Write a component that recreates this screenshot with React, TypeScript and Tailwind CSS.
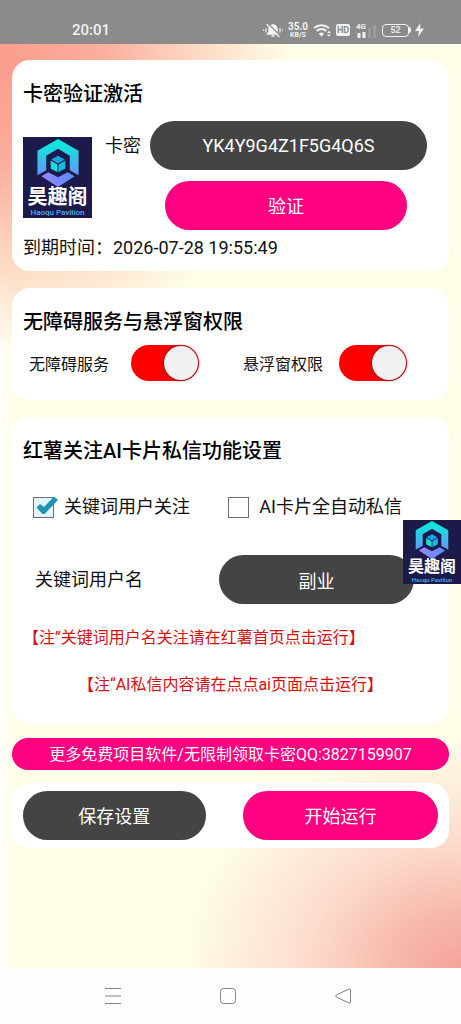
import { useState } from "react";
import type { ReactNode } from "react";
import clsx from "clsx";

export default function App() {
  const [cardKey, setCardKey] = useState("YK4Y9G4Z1F5G4Q6S");
  const [keyword, setKeyword] = useState("副业");
  const [accessibility, setAccessibility] = useState(true);
  const [overlay, setOverlay] = useState(true);
  const [follow, setFollow] = useState(true);
  const [autoMessage, setAutoMessage] = useState(false);

  return (
    <div className="relative flex min-h-screen flex-col bg-[#fefee8] font-[Roboto,'Noto_Sans_CJK_SC',sans-serif] text-lg/6 text-[#111111]">
      <StatusBar />

      <main className="flex flex-1 flex-col bg-[radial-gradient(ellipse_290px_290px_at_0px_20px,#fa9d8e_0%,#fbae9c_35%,#fdd9c4_68%,#fefee800_100%),radial-gradient(ellipse_280px_230px_at_100%_100%,#f4a39a_0%,#f7b9ad_25%,#fcdccc_55%,#fefee800_100%),linear-gradient(90deg,#fffffa_0px,#fefee6_16px,#fefee8_100%)] px-3 pt-4">
        <Card className="mb-[17px] pt-5 pb-[11px]">
          <Title>卡密验证激活</Title>
          <div className="mt-[13px] flex gap-[13px] pr-[11px]">
            <Logo className="mt-4" />
            <div className="flex-1">
              <div className="flex items-center gap-[9px]">
                <label htmlFor="card-key" className="shrink-0">卡密</label>
                <PillInput id="card-key" value={cardKey} onChange={setCardKey} />
              </div>
              <div className="mt-[11px] pr-5 pl-[60px]">
                <PillButton className="w-full bg-[#ff0080]">验证</PillButton>
              </div>
            </div>
          </div>
          <p className="mt-1.5">到期时间：2026-07-28 19:55:49</p>
        </Card>

        <Card className="mb-[17px] pt-5 pb-[19px]">
          <Title>无障碍服务与悬浮窗权限</Title>
          <div className="mt-[9px] flex justify-between pr-[31px] pl-1.5">
            <Switch className="gap-[22px]" label="无障碍服务" checked={accessibility} onChange={setAccessibility} />
            <Switch className="gap-4" label="悬浮窗权限" checked={overlay} onChange={setOverlay} />
          </div>
        </Card>

        <Card className="mb-3.5 pt-5 pb-[27px]">
          <Title>红薯关注AI卡片私信功能设置</Title>
          <div className="mt-[30px] flex justify-between pr-9 pl-2.5">
            <CheckBox label="关键词用户关注" checked={follow} onChange={setFollow} />
            <CheckBox label="AI卡片全自动私信" checked={autoMessage} onChange={setAutoMessage} />
          </div>
          <div className="mt-9 flex items-center justify-between pr-6 pl-3">
            <label htmlFor="keyword">关键词用户名</label>
            <div className="w-[195px]">
              <PillInput id="keyword" value={keyword} onChange={setKeyword} />
            </div>
          </div>
          <Note className="mt-[22px]">【注”关键词用户名关注请在红薯首页点击运行】</Note>
          <Note className="mt-[23px] text-center">【注“AI私信内容请在点点ai页面点击运行】</Note>
        </Card>

        <button className="mb-[13px] h-8 w-full rounded-full bg-[#ff0080] pt-0.5 text-base/6 text-white">
          更多免费项目软件/无限制领取卡密QQ:3827159907
        </button>

        <Card className="flex justify-between py-2">
          <PillButton className="w-[44%] bg-[#444444]">保存设置</PillButton>
          <PillButton className="w-[47%] bg-[#ff0080]">开始运行</PillButton>
        </Card>
      </main>

      <NavBar />

      {/* floating window shortcut, docked to the right edge */}
      <Logo small className="absolute top-[520px] right-0" />
    </div>
  );
}

function Card({ className, children }: { className?: string; children: ReactNode }) {
  return <section className={clsx("rounded-[18px] bg-white px-[11px]", className)}>{children}</section>;
}

function Title({ children }: { children: ReactNode }) {
  return <h2 className="text-xl/7 font-medium text-black">{children}</h2>;
}

function Note({ className, children }: { className?: string; children: ReactNode }) {
  return <p className={clsx("text-base/6 text-[#d81010]", className)}>{children}</p>;
}

function PillInput({ id, value, onChange }: { id: string; value: string; onChange: (v: string) => void }) {
  return (
    <input
      id={id}
      className="h-[49px] w-full min-w-0 rounded-full bg-[#444444] px-4 text-center text-lg/6 text-white outline-none"
      value={value}
      onChange={(e) => onChange(e.target.value)}
    />
  );
}

function PillButton({ className, children }: { className?: string; children: ReactNode }) {
  return <button className={clsx("h-[49px] rounded-full pt-0.5 text-white", className)}>{children}</button>;
}

type ToggleProps = { label: string; checked: boolean; onChange: (v: boolean) => void; className?: string };

function Switch({ label, checked, onChange, className }: ToggleProps) {
  return (
    <label className={clsx("flex items-center text-base/6", className)}>
      <span className="pt-1">{label}</span>
      <input
        type="checkbox"
        role="switch"
        className="flex h-9 w-17 appearance-none items-center rounded-full bg-gray-300 p-px before:size-[34px] before:rounded-full before:bg-[#f1f1f1] before:shadow-[0_0_2px_1px_rgba(100,30,30,0.6)] checked:justify-end checked:bg-[#ff0000]"
        checked={checked}
        onChange={(e) => onChange(e.target.checked)}
      />
    </label>
  );
}

function CheckBox({ label, checked, onChange }: ToggleProps) {
  return (
    <label className="flex items-center gap-2.5">
      <span className="relative">
        <input
          type="checkbox"
          className="block size-[21px] appearance-none border border-[#6e6e6e] bg-white checked:bg-[#e4f4fb]"
          checked={checked}
          onChange={(e) => onChange(e.target.checked)}
        />
        {checked && (
          <svg viewBox="0 0 26 22" className="pointer-events-none absolute -top-px left-0 h-[22px] w-[26px]">
            <path d="M3.5 11.5 L7 8 L11 11 L21 0.5 L25 4 L11.5 18 L9.5 18 Z" fill="#1f93b6" />
          </svg>
        )}
      </span>
      {label}
    </label>
  );
}

function Logo({ small, className }: { small?: boolean; className?: string }) {
  return (
    <div
      className={clsx(
        "flex shrink-0 flex-col items-center bg-[#1b1a4b] font-bold text-white",
        small ? "h-16 w-[58px] pt-px" : "h-[81px] w-[69px] pt-0.5",
        className,
      )}
    >
      <svg viewBox="0 0 42 49" className={small ? "h-[38px] w-[34px]" : "h-12 w-[42px]"}>
        <defs>
          <linearGradient id="hex" x1="0" y1="0" x2="0" y2="1">
            <stop offset="0.2" stopColor="#12e3dc" />
            <stop offset="1" stopColor="#6795f8" />
          </linearGradient>
          <linearGradient id="base" x1="0" y1="0" x2="1" y2="0">
            <stop offset="0" stopColor="#9a86f8" />
            <stop offset="1" stopColor="#5a8cf8" />
          </linearGradient>
        </defs>
        <path d="M21 0 L42 12 V37 L33 32 V17 L21 10 L9 17 V32 L0 37 V12 Z" fill="url(#hex)" />
        <path d="M4 38 L11 34 L21 39 L31 34 L38 38 L21 49 Z" fill="url(#base)" />
        <path d="M21 17 L28 21 L21 25 L14 21 Z" fill="#18a4e8" />
        <path d="M13.5 22 L20.5 26 V34 L13.5 30 Z" fill="#18dcd8" />
        <path d="M28.5 22 L21.5 26 V34 L28.5 30 Z" fill="#1ab9e4" />
      </svg>
      <span className={small ? "text-[16px]/4" : "text-[20px]/5"}>昊趣阁</span>
      <span className={clsx("whitespace-nowrap font-medium text-[#4fb4ea]", small ? "mt-px text-[6px]/2" : "mt-0.5 text-[8px]/2")}>
        Haoqu Pavilion
      </span>
    </div>
  );
}

function StatusBar() {
  return (
    <header className="flex h-11 items-end justify-between bg-[#8b8b8b] pr-[37px] pb-1.5 pl-[72px] text-[#f2f2f2]">
      <span className="text-[15px]/4 font-medium">20:01</span>
      <div className="flex h-4 items-center">
        <svg viewBox="0 0 20 16" className="mr-1 h-4 w-5" fill="none" stroke="currentColor">
          <path d="M4.5 12 H15.5 L14 10 V7 A4 4 0 0 0 6 7 V10 Z M8.5 14 H11.5 M10 2 V4" fill="currentColor" strokeWidth="1.4" />
          <path d="M4.5 1 L17.5 14" stroke="#8b8b8b" strokeWidth="1.3" />
          <path d="M3.5 2 L16.5 15" strokeWidth="1.3" />
          <path d="M0.7 7.5 V9 M3 6 V10.5 M17 6 V10.5 M19.3 7.5 V9" strokeWidth="1.1" />
        </svg>
        <div className="mr-1 w-[22px] text-center font-bold">
          <div className="text-[10px]/[9px]">35.0</div>
          <div className="text-[7px]/2">KB/S</div>
        </div>
        <svg viewBox="0 0 19 16" className="mr-1 h-4 w-[19px]" fill="none" stroke="currentColor" strokeWidth="2">
          <path d="M1 6 A11.5 11.5 0 0 1 16 6 M3.7 9 A7 7 0 0 1 13.3 9" />
          <path d="M8.5 14.5 L5.8 11.8 A4 4 0 0 1 11.2 11.8 Z" fill="currentColor" stroke="none" />
          <path d="M14 11 L16 8.7 L18 11 Z M14 12.5 L16 14.8 L18 12.5 Z" fill="currentColor" stroke="none" />
        </svg>
        <span className="mr-1.5 h-3 w-3.5 rounded-[2px] bg-[#f2f2f2] text-center text-[9px]/3 font-bold text-[#8b8b8b]">HD</span>
        <div className="mr-1.5 flex w-5 flex-col">
          <span className="text-[8px]/2 font-bold">4G</span>
          <svg viewBox="0 0 20 7" className="h-[7px] w-5 overflow-visible" fill="currentColor">
            <path d="M1.5 2 H4.5 V7 H1.5 Z M6.5 1 H9.5 V7 H6.5 Z" />
            <path d="M12.5 -3 H14.5 V7 H12.5 Z M17.5 -6 H19.5 V7 H17.5 Z" opacity="0.25" />
          </svg>
        </div>
        <span className="h-[13px] w-[27px] rounded-[4px] border border-[#f2f2f2] text-center text-[9px]/[11px] font-medium">52</span>
        <span className="mr-1 h-1.5 w-0.5 rounded-r-full bg-[#f2f2f2]" />
        <svg viewBox="0 0 9 14" className="h-3.5 w-[9px]" fill="currentColor">
          <path d="M5.5 0 L0 8 H4 L3 14 L9 5.5 H5 Z" />
        </svg>
      </div>
    </header>
  );
}

function NavBar() {
  return (
    <nav className="flex h-14 items-center justify-center gap-[99px] bg-[#fdfdfd] pr-1.5 text-[#858585]">
      <button aria-label="菜单">
        <svg viewBox="0 0 16 16" className="size-4" stroke="currentColor">
          <path d="M0 0.5 H16 M0 8 H16 M0 15.5 H16" />
        </svg>
      </button>
      <button aria-label="主页">
        <svg viewBox="0 0 16 16" className="size-4" fill="none" stroke="currentColor">
          <rect x="0.5" y="0.5" width="15" height="15" rx="3" />
        </svg>
      </button>
      <button aria-label="返回">
        <svg viewBox="0 0 16 16" className="size-4" fill="none" stroke="currentColor" strokeLinejoin="round">
          <path d="M14 1 Q15.5 0.5 15.5 2 V14 Q15.5 15.5 14 15 L1.3 9 Q0.2 8 1.3 7 Z" />
        </svg>
      </button>
    </nav>
  );
}
